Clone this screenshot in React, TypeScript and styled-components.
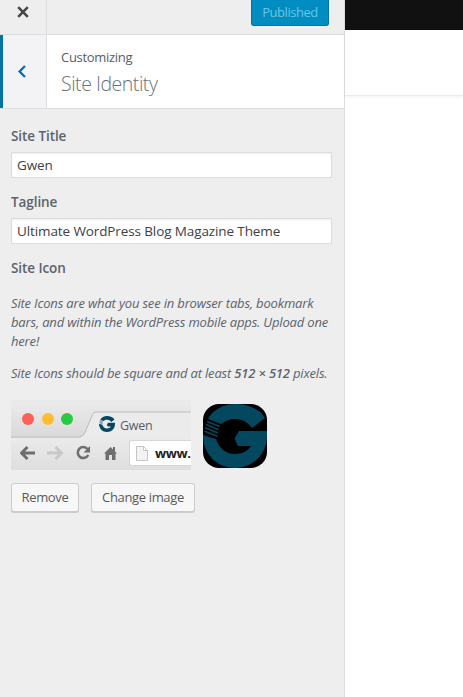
import React from "react";
import styled, { createGlobalStyle } from "styled-components";

const GlobalStyle = createGlobalStyle`
  * { box-sizing: border-box; }
  body { margin: 0; background: #fff; overflow: hidden; font-family: "Open Sans", "Noto Sans", sans-serif; }
`;

const Page = styled.div`
  display: flex;
  width: 463px;
  height: 697px;
  overflow: hidden;
`;

const Sidebar = styled.aside`
  width: 345px;
  flex: none;
  background: #eee;
  border-right: 1px solid #ddd;
`;

const ActionBar = styled.header`
  display: flex;
  justify-content: space-between;
  height: 35px;
  border-bottom: 1px solid #ddd;
`;

const CloseButton = styled.button`
  width: 47px;
  padding: 6px 0 0 17px;
  border: 0;
  border-right: 1px solid #ddd;
  background: #eee;
  display: flex;
`;

const PublishButton = styled.button`
  width: 78px;
  height: 28px;
  margin: -2px 15px 0 0;
  padding: 0 0 1px;
  border: 1px solid #0073aa;
  border-top-color: #008ec2;
  border-radius: 3px;
  background: #008ec2;
  color: #66c6e4;
  font: 13px "Open Sans", sans-serif;
  letter-spacing: -0.45px;
`;

const SectionHeader = styled.div`
  display: flex;
  height: 74px;
  background: #fff;
  border-bottom: 1px solid #ddd;
`;

const BackButton = styled.button`
  width: 47px;
  border: 0;
  border-left: 3px solid #0073aa;
  border-right: 1px solid #ddd;
  background: #f3f3f5;
  padding: 0 0 0 15px;
  display: flex;
  align-items: center;
`;

const Heading = styled.h3`
  margin: 0;
  padding: 12px 0 0 14px;
  font-weight: 400;
  color: #555d66;
`;

const Eyebrow = styled.span`
  display: block;
  font-size: 13px;
  line-height: 20px;
  letter-spacing: -0.3px;
`;

const SectionTitle = styled.span`
  display: block;
  font-size: 19.5px;
  font-weight: 300;
  line-height: 26px;
  margin-top: 4px;
  letter-spacing: -0.47px;
  color: #6a727a;
`;

const Controls = styled.div`
  padding: 17px 12px 0 11px;
`;

const Field = styled.label`
  display: block;
  height: 66px;
`;

const Label = styled.span`
  display: block;
  font-size: 13.5px;
  line-height: 20px;
  font-weight: 600;
  color: #5b636c;
  letter-spacing: -0.08px;
`;

const TextInput = styled.input`
  display: block;
  width: 321px;
  height: 26px;
  margin-top: 6px;
  padding: 0 5px 1px;
  border: 1px solid #ddd;
  box-shadow: inset 0 1px 2px rgba(0, 0, 0, 0.07);
  font: 13.5px "Open Sans", sans-serif;
  letter-spacing: -0.11px;
  color: #3c4146;
  outline: 0;
`;

const Description = styled.p<{ $spacing: string }>`
  margin: 0 0 13px;
  font-size: 13px;
  line-height: 19px;
  font-style: italic;
  color: #5b636c;
  white-space: nowrap;
  letter-spacing: ${(p) => p.$spacing};

  strong {
    font-weight: 600;
  }
`;

const Descriptions = styled.div`
  padding-top: 16px;
`;

const PreviewRow = styled.div`
  display: flex;
  gap: 12px;
  margin-top: 17px;
`;

const Browser = styled.div`
  width: 180px;
  height: 70px;
  overflow: hidden;
  background: #e9e9e9;
`;

const TabStrip = styled.div`
  display: flex;
  height: 36px;
  background: linear-gradient(#ebebeb, #dadada);
  border-top: 1px solid #e8e8e8;
`;

const Lights = styled.div`
  display: flex;
  gap: 7.7px;
  width: 70px;
  padding: 12px 0 0 11px;
`;

const Light = styled.i<{ $color: string }>`
  width: 12px;
  height: 12px;
  flex: none;
  border-radius: 50%;
  background: ${(p) => p.$color};
`;

const Tab = styled.div`
  position: relative;
  width: 110px;
  display: flex;
  align-items: center;
  padding: 11px 0 0 18px;
  gap: 5px;
  font-size: 12.5px;
  letter-spacing: -0.3px;
  line-height: 18px;
  color: #555d66;
`;

const TabShape = styled.svg`
  position: absolute;
  left: 0;
  top: 0;
`;

const Favicon = styled.span`
  position: relative;
  display: flex;
`;

const TabTitle = styled.span`
  position: relative;
  padding-top: 3px;
`;

const Toolbar = styled.div`
  display: flex;
  height: 34px;
  background: linear-gradient(#ebebeb, #dedede);
`;

const NavIcons = styled.svg`
  flex: none;
`;

const AddressBar = styled.div`
  display: flex;
  align-items: center;
  flex: 1;
  height: 26px;
  margin-top: 4px;
  padding-left: 6px;
  gap: 7px;
  background: #fff;
  border: 1px solid #d6d6d6;
  border-right: 0;
  border-radius: 3px 0 0 3px;
  color: #222;
  font-size: 13px;
  font-weight: 700;
  letter-spacing: -0.4px;
`;

const AppIcon = styled.div`
  width: 64px;
  height: 64px;
  margin-top: 4px;
  border-radius: 16px;
  overflow: hidden;
  background: #000;
`;

const ButtonRow = styled.div`
  display: flex;
  gap: 12px;
  margin-top: 13px;
`;

const Button = styled.button<{ $width: number }>`
  width: ${(p) => p.$width}px;
  height: 29px;
  padding: 0 0 1px;
  border: 1px solid #ccc;
  border-radius: 3px;
  background: #f7f7f7;
  box-shadow: 0 1px 0 #ccc;
  color: #5a5a5a;
  font: 13px "Open Sans", sans-serif;
  letter-spacing: -0.35px;
  white-space: nowrap;
`;

const Site = styled.main`
  flex: 1;
  background: #fff;
`;

const SiteTopBar = styled.div`
  height: 30px;
  background: #111;
`;

const SiteHeader = styled.div`
  height: 66px;
  border-bottom: 1px solid #ebebeb;
  box-shadow: 0 1px 3px rgba(0, 0, 0, 0.06);
`;

function GMark({ size }: { size: number }) {
  return (
    <svg width={size} height={size} viewBox="0 0 64 64">
      <path
        fill="#04485f"
        d="M5 15 C10 6 20 0 32 0 C45 0 57 5 62 14 L49 24 C45 18 39 15 32 15 C26 15 22 17 18 20 Z M0 31 L13 35 C16 44 23 50 32 50 C39 50 45 47 48 42 L35 42 L31.500 34.500 L36 27 L64 27 L64 32 C64 50 50 64 32 64 C14 64 0 50 0 31 Z"
      />
      <path stroke="#04485f" strokeWidth="1.6" d="M4 17.500 L16.500 22.500 M3 20.500 L15.500 25.500 M2 23.800 L15 29 M1.500 27.200 L14.500 32.200" />
    </svg>
  );
}

export default function App() {
  return (
    <Page>
      <GlobalStyle />
      <Sidebar>
        <ActionBar>
          <CloseButton aria-label="Close">
            <svg width="12" height="12" viewBox="0 0 12 12">
              <path d="M1.200 1.200 L10.800 10.800 M10.800 1.200 L1.200 10.800" stroke="#444" strokeWidth="2.500" />
            </svg>
          </CloseButton>
          <PublishButton>Published</PublishButton>
        </ActionBar>
        <SectionHeader>
          <BackButton aria-label="Back">
            <svg width="9" height="14" viewBox="0 0 9 14">
              <path d="M7 1 L1.600 6.500 L7 12" stroke="#0073aa" strokeWidth="2.400" fill="none" />
            </svg>
          </BackButton>
          <Heading>
            <Eyebrow>Customizing</Eyebrow>
            <SectionTitle>Site Identity</SectionTitle>
          </Heading>
        </SectionHeader>
        <Controls>
          <Field>
            <Label>Site Title</Label>
            <TextInput defaultValue="Gwen" />
          </Field>
          <Field>
            <Label>Tagline</Label>
            <TextInput defaultValue="Ultimate WordPress Blog Magazine Theme" />
          </Field>
          <Label>Site Icon</Label>
          <Descriptions>
            <Description $spacing="-0.17px">
              Site Icons are what you see in browser tabs, bookmark
              <br />
              bars, and within the WordPress mobile apps. Upload one
              <br />
              here!
            </Description>
            <Description $spacing="-0.18px">
              Site Icons should be square and at least <strong>512 × 512</strong> pixels.
            </Description>
          </Descriptions>
          <PreviewRow>
            <Browser>
              <TabStrip>
                <Lights>
                  <Light $color="#ff5f57" />
                  <Light $color="#ffbd2e" />
                  <Light $color="#28ca42" />
                </Lights>
                <Tab>
                  <TabShape width="110" height="36" viewBox="0 0 110 36">
                    <path d="M0 36 C3 35 4 33 5 30 L11 15 C12 12 13 11 16 11 L111 11 V36 Z" fill="#ebebeb" />
                    <path d="M0 35 C3 34 4 32 5 29 L11 15 C12 12 13 11 16 11 L111 11" fill="none" stroke="#bdbdbd" />
                  </TabShape>
                  <Favicon>
                    <GMark size={16} />
                  </Favicon>
                  <TabTitle>Gwen</TabTitle>
                </Tab>
              </TabStrip>
              <Toolbar>
                <NavIcons width="118" height="34" viewBox="0 0 118 34">
                  <path d="M0 .5 H72 M0 1.500 H70" stroke="#cecece" />
                  <g fill="none" strokeWidth="3" strokeLinejoin="round">
                    <path d="M24 17 H11 M16.500 11 L10.500 17 L16.500 23" stroke="#6e6e6e" />
                    <path d="M36 17 H49 M44.500 11 L50.500 17 L44.500 23" stroke="#c8c8c8" />
                    <path d="M76.500 13 A5.500 5.500 0 1 0 77.200 19" stroke="#6e6e6e" strokeWidth="2.600" />
                  </g>
                  <path d="M79 10 V16.500 H72.500 Z" fill="#6e6e6e" />
                  <path d="M93 17.500 L99.500 11 L102 13.500 V11 H104 V15.500 L106 17.500 H104.500 V24 H101 V19 H98 V24 H94.500 V17.500 Z" fill="#6e6e6e" />
                </NavIcons>
                <AddressBar>
                  <svg width="12" height="15" viewBox="0 0 12 15">
                    <path d="M.5 .5 H7.500 L11.500 4.500 V14.500 H.5 Z M7.500 .5 V4.500 H11.500" fill="#f3f3f3" stroke="#c4c4c4" />
                  </svg>
                  <span>www.</span>
                </AddressBar>
              </Toolbar>
            </Browser>
            <AppIcon>
              <GMark size={64} />
            </AppIcon>
          </PreviewRow>
          <ButtonRow>
            <Button $width={68}>Remove</Button>
            <Button $width={104}>Change image</Button>
          </ButtonRow>
        </Controls>
      </Sidebar>
      <Site>
        <SiteTopBar />
        <SiteHeader />
      </Site>
    </Page>
  );
}
